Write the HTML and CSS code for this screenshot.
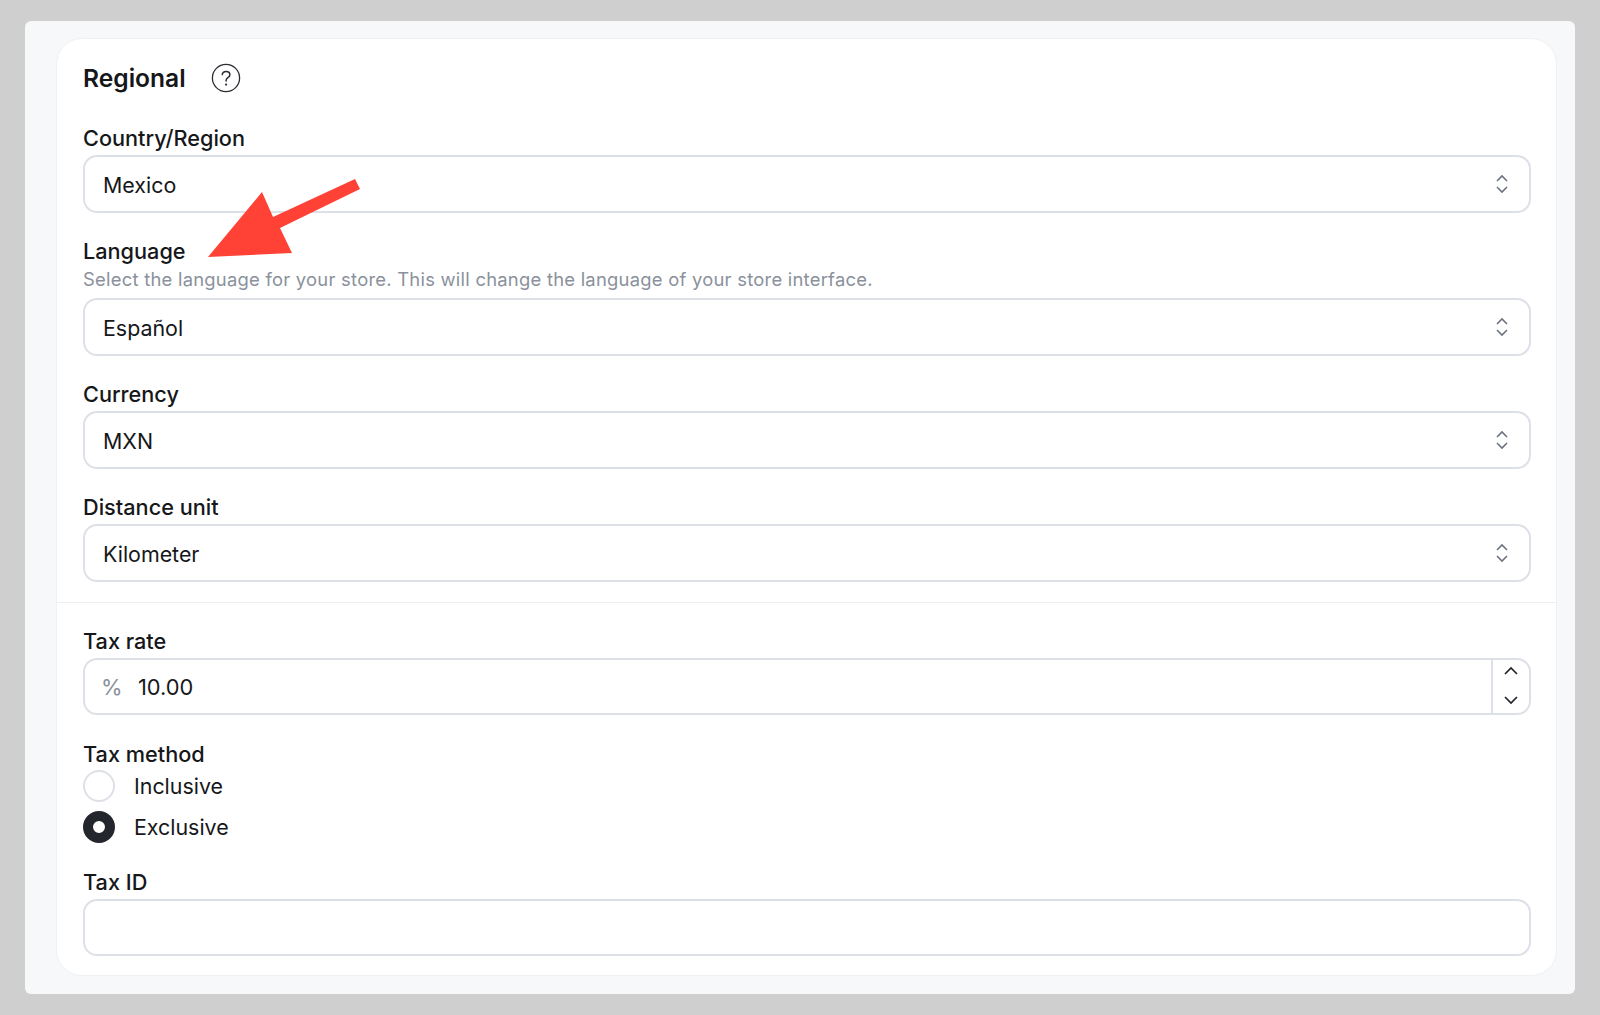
FILE: index.html
```html
<!DOCTYPE html>
<html lang="en">
<head>
  <meta charset="UTF-8" />
  <title>Regional settings</title>
  <link rel="stylesheet" href="styles.css">
</head>
<body>
  <div class="panel">
    <form class="card">
      <section class="section section-top">
        <div class="card-title">
          <h2>Regional</h2>
          <svg class="help-icon" width="30" height="30" viewBox="0 0 30 30" fill="none" stroke="#2b2d33" stroke-linecap="round">
            <circle cx="15" cy="15" r="13.6" stroke-width="1.3" />
            <path d="M11.2 11.6c.3-2 1.9-3.2 3.9-3.2 2.2 0 3.8 1.4 3.8 3.3 0 1.5-.9 2.3-2 3-1.1.7-1.8 1.3-1.8 2.7v.5" stroke-width="1.5" />
            <circle cx="15.1" cy="21.6" r=".5" stroke-width="1.2" />
          </svg>
        </div>

        <div class="field">
          <label>Country/Region</label>
          <div class="select-wrap">
            <select><option>Mexico</option></select>
            <svg class="updown" width="14" height="20" viewBox="0 0 14 20" fill="none" stroke="#6b7280" stroke-width="1.6"><path d="M2 7l5-5 5 5M2 13l5 5 5-5" /></svg>
          </div>
        </div>

        <div class="field">
          <label>Language</label>
          <p class="help">Select the language for your store. This will change the language of your store interface.</p>
          <div class="select-wrap">
            <select><option>Español</option></select>
            <svg class="updown" width="14" height="20" viewBox="0 0 14 20" fill="none" stroke="#6b7280" stroke-width="1.6"><path d="M2 7l5-5 5 5M2 13l5 5 5-5" /></svg>
          </div>
        </div>

        <div class="field">
          <label>Currency</label>
          <div class="select-wrap">
            <select><option>MXN</option></select>
            <svg class="updown" width="14" height="20" viewBox="0 0 14 20" fill="none" stroke="#6b7280" stroke-width="1.6"><path d="M2 7l5-5 5 5M2 13l5 5 5-5" /></svg>
          </div>
        </div>

        <div class="field">
          <label>Distance unit</label>
          <div class="select-wrap">
            <select><option>Kilometer</option></select>
            <svg class="updown" width="14" height="20" viewBox="0 0 14 20" fill="none" stroke="#6b7280" stroke-width="1.6"><path d="M2 7l5-5 5 5M2 13l5 5 5-5" /></svg>
          </div>
        </div>
      </section>

      <section class="section section-bottom">
        <div class="field">
          <label>Tax rate</label>
          <div class="number-input">
            <span class="prefix">%</span>
            <input type="text" value="10.00">
            <div class="stepper">
              <svg width="16" height="10" viewBox="0 0 16 10" fill="none" stroke="#23252b" stroke-width="1.7"><path d="M2 8l6-6 6 6" /></svg>
              <svg width="16" height="10" viewBox="0 0 16 10" fill="none" stroke="#23252b" stroke-width="1.7"><path d="M2 2l6 6 6-6" /></svg>
            </div>
          </div>
        </div>

        <div class="field">
          <label>Tax method</label>
          <div class="radio-group">
            <div class="radio-row">
              <span class="radio"></span>
              <span>Inclusive</span>
            </div>
            <div class="radio-row">
              <span class="radio checked"></span>
              <span>Exclusive</span>
            </div>
          </div>
        </div>

        <div class="field">
          <label>Tax ID</label>
          <input class="text-input" type="text">
        </div>
      </section>
    </form>

    <svg class="arrow" width="170" height="90" viewBox="0 0 170 90">
      <polygon points="149,2 154,12 74,51 86,76 2,80 56,15 67,40" fill="#ff4136" />
    </svg>
  </div>
</body>
</html>
```

FILE: styles.css
```css
* {
  box-sizing: border-box;
}

body {
  margin: 0;
  padding: 21px 25px;
  background: #cfcfcf;
  font-family: Inter, "Noto Sans", sans-serif;
  color: #16171a;
}

.panel {
  position: relative;
  height: 973px;
  padding: 17px 18px 18px 31px;
  background: #f7f8fa;
  border-radius: 6px;
}

.card {
  display: block;
  height: 938px;
  background: white;
  border: 1px solid #f0f1f3;
  border-radius: 26px;
}

.section {
  padding: 0 25px 0 26px;
}

.section-top {
  padding-top: 20px;
  padding-bottom: 20px;
  border-bottom: 1px solid #eceef1;
}

.section-bottom {
  padding-top: 24px;
}

.card-title {
  display: flex;
  align-items: center;
  gap: 25px;
  height: 38px;
  margin-bottom: 27px;
}

.card-title h2 {
  margin: 0;
  font-size: 24.6px;
  font-weight: 600;
}

.field {
  margin-bottom: 25px;
}

.section-top .field {
  margin-bottom: 24px;
}

.field:last-child,
.section-top .field:last-child {
  margin-bottom: 0;
}

label {
  display: block;
  height: 28px;
  margin-bottom: 3px;
  font-size: 21.7px;
  line-height: 28px;
  font-weight: 500;
}

.help {
  margin: -1px 0 7px;
  font-size: 18.4px;
  line-height: 24px;
  letter-spacing: 0.25px;
  color: #8a919c;
}

.select-wrap {
  position: relative;
}

select,
.text-input,
.number-input {
  display: block;
  width: 100%;
  height: 57px;
  background: white;
  border: 2px solid #dde1e7;
  border-radius: 14px;
  font-family: inherit;
  font-size: 21.4px;
  color: #16171a;
}

select {
  height: 58px;
  padding: 1px 18px 0;
  appearance: none;
}

.updown {
  position: absolute;
  top: 19px;
  right: 22px;
}

.number-input {
  display: flex;
  align-items: center;
}

.prefix {
  width: 53px;
  padding-left: 16px;
  font-size: 22px;
  color: #8a919c;
}

.number-input input {
  flex: 1;
  min-width: 0;
  border: none;
  outline: none;
  padding: 0;
  font-family: inherit;
  font-size: 21.8px;
  color: #16171a;
}

.stepper {
  display: flex;
  flex-direction: column;
  align-items: center;
  justify-content: space-between;
  width: 38px;
  height: 100%;
  padding: 6px 0 8px;
  border-left: 2px solid #dde1e7;
}

.radio-group {
  display: flex;
  flex-direction: column;
  gap: 9px;
  margin-top: -1px;
}

.radio-row {
  display: flex;
  align-items: center;
  gap: 19px;
  height: 32px;
  font-size: 21.4px;
}

.radio {
  width: 32px;
  height: 32px;
  background: white;
  border: 2px solid #dde1e7;
  border-radius: 50%;
}

.radio.checked {
  border: 10px solid #24262d;
}

.text-input {
  padding: 0 18px;
}

.arrow {
  position: absolute;
  top: 156px;
  left: 181px;
}
```
